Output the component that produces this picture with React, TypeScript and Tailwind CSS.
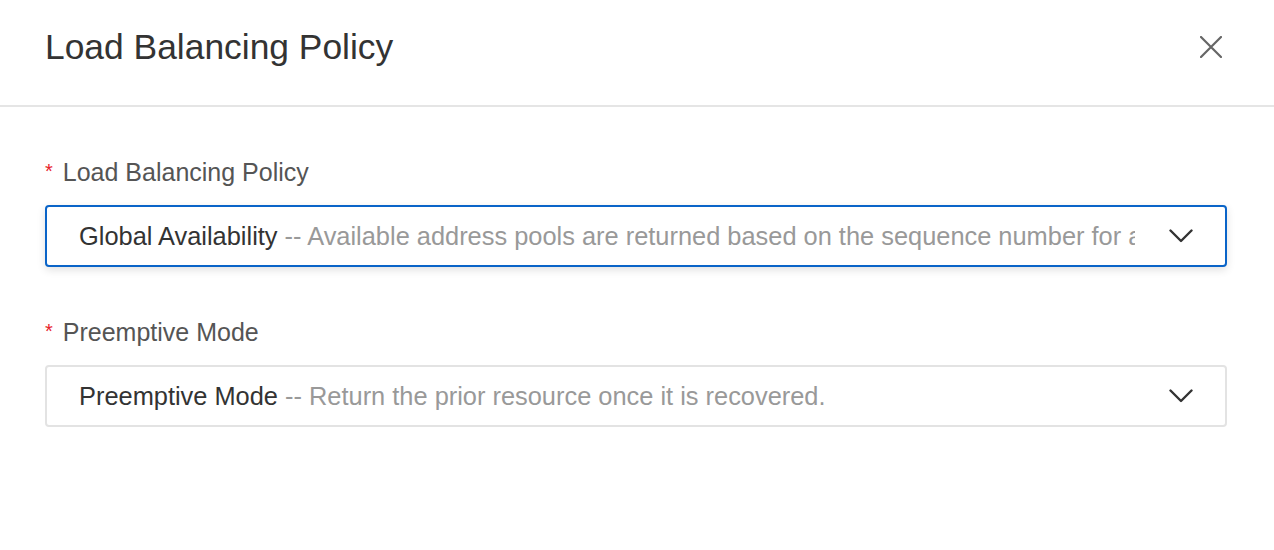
import React from "react";

function Chevron() {
  return (
    <svg width="24" height="14" viewBox="0 0 24 14" fill="none" className="shrink-0">
      <path d="M1.5 1.5 L12 12 L22.5 1.5" stroke="#333" strokeWidth="2.4" strokeLinecap="round" strokeLinejoin="round" />
    </svg>
  );
}

function Field({ label, value, desc, focused }: { label: string; value: string; desc: string; focused?: boolean }) {
  return (
    <div className="flex flex-col">
      <div className="flex items-center h-[36px] mb-[15px] pt-[2px] text-[25px] text-[#555]">
        <span className="text-[#e8222b] text-[20px] mr-[10px] leading-none relative top-[-2px]">*</span>
        <span>{label}</span>
      </div>
      <div
        className={
          focused
            ? "flex items-center h-[62px] rounded-[4px] border-2 border-[#0a64c8] bg-white pl-[32px] pr-[32px] shadow-[0_3px_8px_rgba(0,0,0,0.12)]"
            : "flex items-center h-[62px] rounded-[4px] border-2 border-[#e3e3e3] bg-white pl-[32px] pr-[32px]"
        }
      >
        <div className="flex-1 overflow-hidden whitespace-nowrap text-[25.4px] mr-[34px]">
          <span className="text-[#333]">{value}</span>
          <span className="text-[#999]"> -- {desc}</span>
        </div>
        <Chevron />
      </div>
    </div>
  );
}

export default function App() {
  return (
    <div className="w-[1274px] h-[550px] bg-white" style={{ fontFamily: '"Liberation Sans", Arial, sans-serif' }}>
      <div className="flex items-center justify-between h-[107px] pl-[45px] pr-[52px] border-b-2 border-[#e5e5e5]">
        <div className="text-[35.4px] text-[#333] pb-[10px]">Load Balancing Policy</div>
        <svg width="22" height="22" viewBox="0 0 22 22" className="mb-[12px]">
          <path d="M1 1 L21 21 M21 1 L1 21" stroke="#666" strokeWidth="2.2" strokeLinecap="round" />
        </svg>
      </div>
      <div className="flex flex-col gap-[47px] pl-[45px] pr-[47px] pt-[47px]">
        <Field
          label="Load Balancing Policy"
          value="Global Availability"
          desc="Available address pools are returned based on the sequence number for all address pools in the primary and secondary pool sets"
          focused
        />
        <Field
          label="Preemptive Mode"
          value="Preemptive Mode"
          desc="Return the prior resource once it is recovered."
        />
      </div>
    </div>
  );
}
